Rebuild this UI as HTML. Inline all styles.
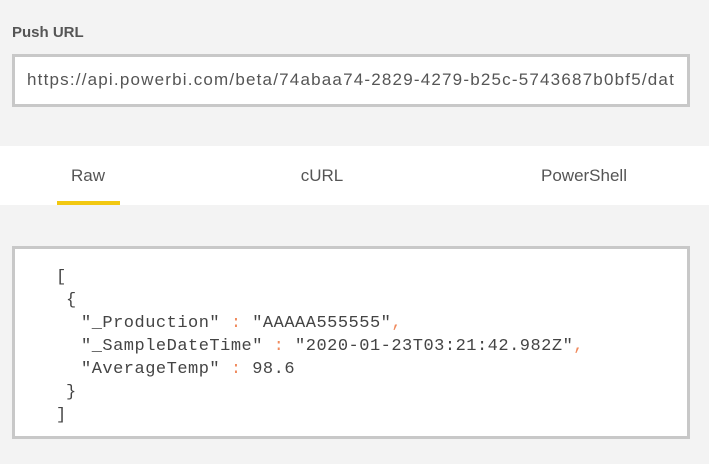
<!DOCTYPE html>
<html><head><meta charset="utf-8"><style>
body{margin:0;width:709px;height:464px;background:#f3f3f3;font-family:"Liberation Sans",sans-serif;position:relative;overflow:hidden}
.lbl{position:absolute;left:12px;top:24px;font-size:15px;font-weight:bold;color:#555}
.inp{position:absolute;left:12px;top:54px;width:672px;height:47px;border:3px solid #c8c8c8;background:#fff;box-sizing:content-box}
.inp span{position:absolute;left:12px;top:13px;font-size:17px;color:#555;white-space:nowrap;letter-spacing:1.2px}
.tabs{position:absolute;left:0;top:146px;width:709px;height:59px;background:#fff}
.tab{position:absolute;top:20px;font-size:17px;color:#555;transform:translateX(-50%)}
.ul{position:absolute;left:57px;top:55px;width:63px;height:4px;background:#f2c811}
.code{position:absolute;left:12px;top:246px;width:672px;height:187px;border:3px solid #c8c8c8;background:#fff}
.ln{position:absolute;font-family:"Liberation Mono",monospace;font-size:17px;letter-spacing:0.5px;color:#444;white-space:pre}
.o{color:#f08a5d}
</style></head><body>
<div class="lbl">Push URL</div>
<div class="inp"><span>https://api.powerbi.com/beta/74abaa74-2829-4279-b25c-5743687b0bf5/dat</span></div>
<div class="tabs">
<div class="tab" style="left:88px">Raw</div>
<div class="tab" style="left:322px">cURL</div>
<div class="tab" style="left:584px">PowerShell</div>
<div class="ul"></div>
</div>
<div class="code">
<div class="ln" style="left:41px;top:19px">[</div>
<div class="ln" style="left:51px;top:42px">{</div>
<div class="ln" style="left:66px;top:65px">"_Production" <span class="o">:</span> "AAAAA555555"<span class="o">,</span></div>
<div class="ln" style="left:66px;top:88px">"_SampleDateTime" <span class="o">:</span> "2020-01-23T03:21:42.982Z"<span class="o">,</span></div>
<div class="ln" style="left:66px;top:111px">"AverageTemp" <span class="o">:</span> 98.6</div>
<div class="ln" style="left:51px;top:134px">}</div>
<div class="ln" style="left:41px;top:157px">]</div>
</div>
</body></html>
